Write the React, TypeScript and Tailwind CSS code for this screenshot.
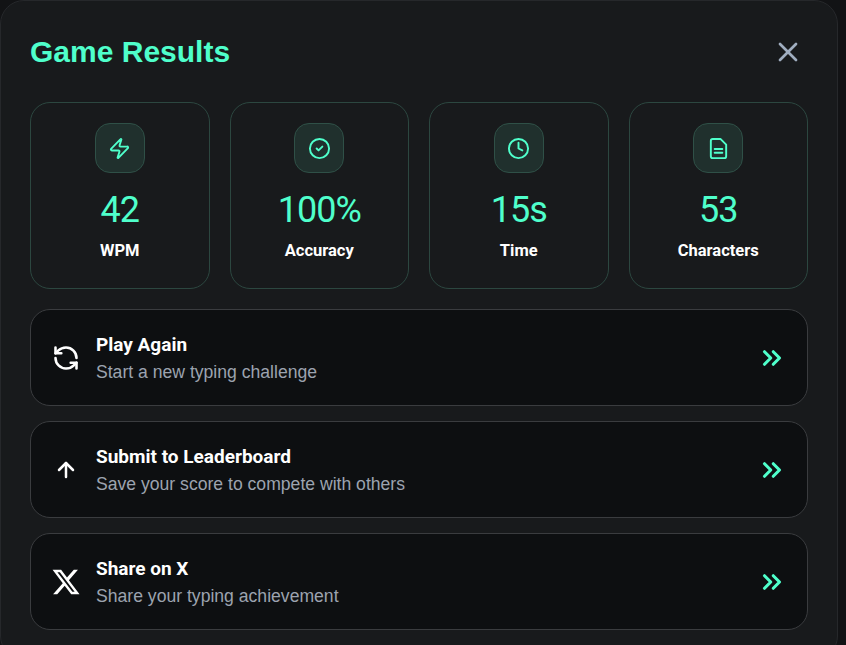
import { ArrowUp, ChevronsRight, CircleCheck, Clock, RefreshCcw, X, Zap } from 'lucide-react'
import type { ReactNode } from 'react'

const XLogo = () => (
    <svg viewBox="0 0 24 24" width={30} height={30} fill="currentColor">
        <path d="M18.244 2.25h3.308l-7.227 8.26 8.502 11.24H16.17l-5.214-6.817L4.99 21.75H1.68l7.73-8.835L1.254 2.25H8.08l4.713 6.231zm-1.161 17.52h1.833L7.084 4.126H5.117z" />
    </svg>
)

const FileIcon = () => (
    <svg viewBox="0 0 24 24" width={23} height={23} fill="none" stroke="currentColor" strokeWidth={2} strokeLinecap="round" strokeLinejoin="round">
        <path d="M6 2h8l6 6v12a2 2 0 0 1-2 2H6a2 2 0 0 1-2-2V4a2 2 0 0 1 2-2z" />
        <path d="M8 12.5h8M8 16.5h8" />
    </svg>
)

const stats = [
    { icon: <Zap size={23} strokeWidth={2} />, value: '42', label: 'WPM' },
    { icon: <CircleCheck size={23} strokeWidth={2} />, value: '100%', label: 'Accuracy' },
    { icon: <Clock size={23} strokeWidth={2} />, value: '15s', label: 'Time' },
    { icon: <FileIcon />, value: '53', label: 'Characters' },
]

const actions: { icon: ReactNode; title: string; sub: string }[] = [
    { icon: <RefreshCcw size={28} strokeWidth={2.2} />, title: 'Play Again', sub: 'Start a new typing challenge' },
    { icon: <ArrowUp size={24} strokeWidth={2.5} />, title: 'Submit to Leaderboard', sub: 'Save your score to compete with others' },
    { icon: <XLogo />, title: 'Share on X', sub: 'Share your typing achievement' },
]

export default function App() {
    return (
        <div className="h-[645px] w-[846px] overflow-hidden bg-[#121315] font-['Liberation_Sans',sans-serif]">
            <div className="h-[660px] w-[838px] rounded-[24px] border border-[#26282b] bg-[#181a1c] px-[29px] pt-[30px]">
                <div className="mb-[29px] flex h-[42px] items-center justify-between">
                    <h2 className="text-[30px] leading-[42px] font-bold text-[#4fffcb]">Game Results</h2>
                    <button className="mr-[4px] text-[#a0aec0]">
                        <X size={32} strokeWidth={2} />
                    </button>
                </div>
                <div className="grid grid-cols-4 gap-[20px]">
                    {stats.map((s) => (
                        <div
                            key={s.label}
                            className="flex h-[187px] flex-col items-center rounded-[20px] border border-[#2c4740] pt-[20px]"
                        >
                            <div className="flex h-[50px] w-[50px] items-center justify-center rounded-[15px] border border-[#2f5047] bg-[#20302d] text-[#4fffcb]">
                                {s.icon}
                            </div>
                            <div className="mt-[17px] font-['Roboto',sans-serif] text-[36px] leading-[40px] font-normal tracking-[-1px] text-[#4fffcb]">
                                {s.value}
                            </div>
                            <div className="mt-[9px] font-['Roboto',sans-serif] text-[16.5px] leading-[24px] font-bold text-white">
                                {s.label}
                            </div>
                        </div>
                    ))}
                </div>
                <div className="mt-[20px] flex flex-col gap-[15px]">
                    {actions.map((a) => (
                        <div
                            key={a.title}
                            className="flex h-[97px] items-center gap-[15px] rounded-[20px] border border-[#3a3c3f] bg-[#0d0f11] pr-[20px] pl-[20px]"
                        >
                            <div className="flex w-[30px] justify-center text-white">{a.icon}</div>
                            <div className="flex-1">
                                <div className="pt-px font-['Roboto',sans-serif] text-[19px] leading-[27px] font-bold text-white">
                                    {a.title}
                                </div>
                                <div className="text-[17.6px] leading-[28px] text-[#9ca3af]">{a.sub}</div>
                            </div>
                            <ChevronsRight size={30} strokeWidth={2.5} className="text-[#4fffcb]" />
                        </div>
                    ))}
                </div>
            </div>
        </div>
    )
}
